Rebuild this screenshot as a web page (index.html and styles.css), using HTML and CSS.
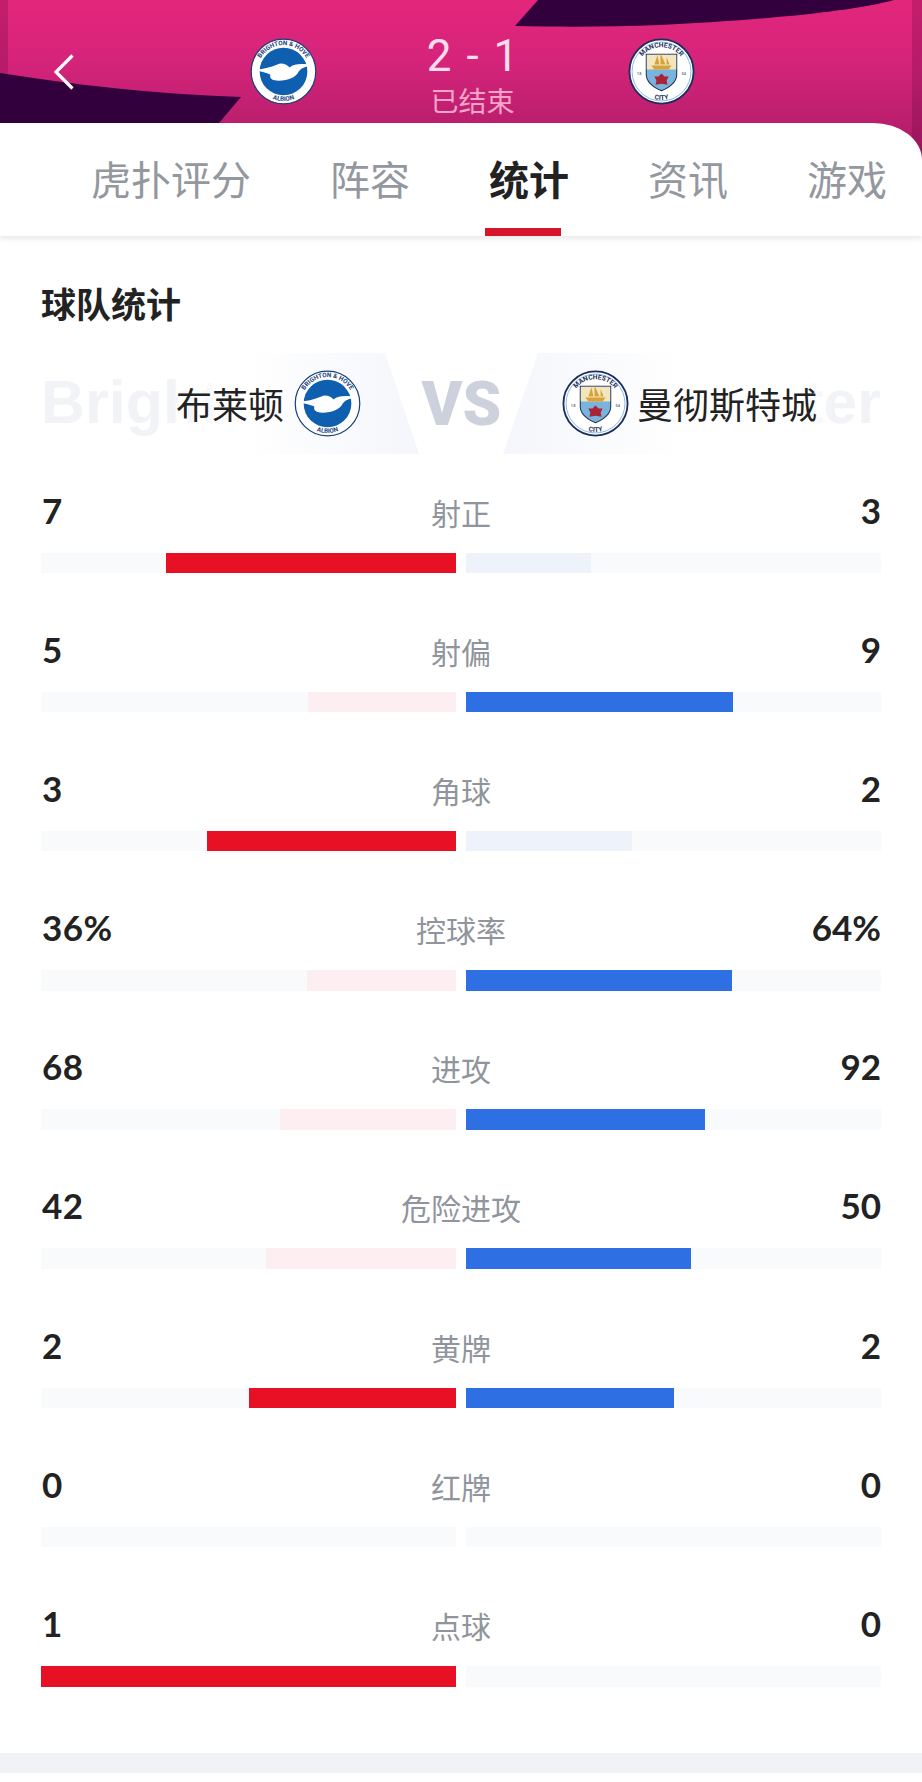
FILE: index.html
```html
<!DOCTYPE html>
<html lang="zh">
<head>
<meta charset="utf-8">
<title>球队统计</title>
<link rel="stylesheet" href="styles.css">
</head>
<body>
<header class="match">
  <svg class="shapes" viewBox="0 0 922 123" preserveAspectRatio="none" aria-hidden="true">
    <path d="M515 26L538 0H894C850 12 760 20 660 25C610 27 560 27 515 26Z" fill="#33003e"/>
    <path d="M0 73C70 84 150 94 241 97L219 123H0Z" fill="#33003e"/>
  </svg>
  <svg class="back" viewBox="0 0 20 36" aria-hidden="true"><path d="M18.500 1.500L2 18L18.500 34.500" fill="none" stroke="#fff" stroke-width="3.200"/></svg>
  <svg class="crest" viewBox="0 0 66 66">
    <circle cx="33" cy="33" r="31.800" fill="#fff" stroke="#17407c" stroke-width="1.200"/>
    <circle cx="33" cy="33" r="23.500" fill="#0f5fb0"/>
    <path id="bh-top-a" d="M7 33a26 26 0 0 1 52 0" fill="none"/>
    <path id="bh-bot-a" d="M4 33a29 29 0 0 0 58 0" fill="none"/>
    <text class="ring" font-size="6.200" fill="#17407c"><textPath href="#bh-top-a" startOffset="50%" text-anchor="middle">BRIGHTON &amp; HOVE</textPath></text>
    <text class="ring" font-size="6.200" fill="#17407c"><textPath href="#bh-bot-a" startOffset="50%" text-anchor="middle">ALBION</textPath></text>
    <path d="M3 31C12 31 20 29 27 26C31 24 36 26 39 29C44 25 52 25 62 27C54 28 50 30 48 33C45 39 38 42 28 42C22 42 19 40 20 36C16 34 9 33 3 31Z" fill="#fff"/>
  </svg>
  <div class="score">
    <div class="score-num">2 - 1</div>
    <div class="score-state">已结束</div>
  </div>
  <svg class="crest" viewBox="0 0 66 66">
    <circle cx="33" cy="33" r="31.600" fill="#fff" stroke="#1c2c5b" stroke-width="1.800"/>
    <circle cx="33" cy="33" r="29" fill="none" stroke="#6cabdd" stroke-width=".8"/>
    <path id="mc-top-a" d="M9 33a24 24 0 0 1 48 0" fill="none"/>
    <path id="mc-bot-a" d="M5 33a28 28 0 0 0 56 0" fill="none"/>
    <text class="ring" font-size="6.600" fill="#1c2c5b"><textPath href="#mc-top-a" startOffset="50%" text-anchor="middle">MANCHESTER</textPath></text>
    <text class="ring" font-size="6.600" fill="#1c2c5b"><textPath href="#mc-bot-a" startOffset="50%" text-anchor="middle">CITY</textPath></text>
    <text class="ring" x="11" y="36" font-size="4" fill="#6d7f99" text-anchor="middle">18</text>
    <text class="ring" x="55" y="36" font-size="4" fill="#6d7f99" text-anchor="middle">54</text>
    <path d="M18 16H48V36C48 44 40 49 33 52C26 49 18 44 18 36Z" fill="#7ab3dc" stroke="#1c2c5b" stroke-width="1"/>
    <path d="M18.500 16.500H47.500V31H18.500Z" fill="#f3e6bd"/>
    <path d="M23 27L26 31H40L43 27ZM26 26L29 17L31 26ZM32 26V15L37 26ZM38 26V19L41 26Z" fill="#d8a23a"/>
    <path d="M33 35L36 38L40 38L38 42L39 46L33 45L27 46L28 42L26 38L30 38Z" fill="#a92437"/>
  </svg>
</header>

<nav class="tabs">
  <span class="tab">虎扑评分</span>
  <span class="tab">阵容</span>
  <span class="tab tab-active">统计</span>
  <span class="tab">资讯</span>
  <span class="tab">游戏</span>
</nav>

<main class="panel">
  <h2 class="title">球队统计</h2>

  <section class="versus">
    <span class="ghost ghost-left">Brighton</span>
    <span class="ghost ghost-right">Manchester</span>
    <span class="wedge wedge-left"></span>
    <span class="wedge wedge-right"></span>
    <div class="team team-left">
      <span class="team-name">布莱顿</span>
      <svg class="crest" viewBox="0 0 66 66">
        <circle cx="33" cy="33" r="31.800" fill="#fff" stroke="#17407c" stroke-width="1.200"/>
        <circle cx="33" cy="33" r="23.500" fill="#0f5fb0"/>
        <path id="bh-top-b" d="M7 33a26 26 0 0 1 52 0" fill="none"/>
        <path id="bh-bot-b" d="M4 33a29 29 0 0 0 58 0" fill="none"/>
        <text class="ring" font-size="6.200" fill="#17407c"><textPath href="#bh-top-b" startOffset="50%" text-anchor="middle">BRIGHTON &amp; HOVE</textPath></text>
        <text class="ring" font-size="6.200" fill="#17407c"><textPath href="#bh-bot-b" startOffset="50%" text-anchor="middle">ALBION</textPath></text>
        <path d="M3 31C12 31 20 29 27 26C31 24 36 26 39 29C44 25 52 25 62 27C54 28 50 30 48 33C45 39 38 42 28 42C22 42 19 40 20 36C16 34 9 33 3 31Z" fill="#fff"/>
      </svg>
    </div>
    <div class="vs">VS</div>
    <div class="team team-right">
      <svg class="crest" viewBox="0 0 66 66">
        <circle cx="33" cy="33" r="31.600" fill="#fff" stroke="#1c2c5b" stroke-width="1.800"/>
        <circle cx="33" cy="33" r="29" fill="none" stroke="#6cabdd" stroke-width=".8"/>
        <path id="mc-top-b" d="M9 33a24 24 0 0 1 48 0" fill="none"/>
        <path id="mc-bot-b" d="M5 33a28 28 0 0 0 56 0" fill="none"/>
        <text class="ring" font-size="6.600" fill="#1c2c5b"><textPath href="#mc-top-b" startOffset="50%" text-anchor="middle">MANCHESTER</textPath></text>
        <text class="ring" font-size="6.600" fill="#1c2c5b"><textPath href="#mc-bot-b" startOffset="50%" text-anchor="middle">CITY</textPath></text>
        <text class="ring" x="11" y="36" font-size="4" fill="#6d7f99" text-anchor="middle">18</text>
        <text class="ring" x="55" y="36" font-size="4" fill="#6d7f99" text-anchor="middle">54</text>
        <path d="M18 16H48V36C48 44 40 49 33 52C26 49 18 44 18 36Z" fill="#7ab3dc" stroke="#1c2c5b" stroke-width="1"/>
        <path d="M18.500 16.500H47.500V31H18.500Z" fill="#f3e6bd"/>
        <path d="M23 27L26 31H40L43 27ZM26 26L29 17L31 26ZM32 26V15L37 26ZM38 26V19L41 26Z" fill="#d8a23a"/>
        <path d="M33 35L36 38L40 38L38 42L39 46L33 45L27 46L28 42L26 38L30 38Z" fill="#a92437"/>
      </svg>
      <span class="team-name">曼彻斯特城</span>
    </div>
  </section>

  <div class="stats">
    <div class="stat">
      <div class="stat-head"><span class="num">7</span><span class="label">射正</span><span class="num num-right">3</span></div>
      <div class="bars">
        <div class="track track-left"><div class="fill red" style="width:70%"></div></div>
        <div class="track"><div class="fill blue-pale" style="width:30%"></div></div>
      </div>
    </div>
    <div class="stat">
      <div class="stat-head"><span class="num">5</span><span class="label">射偏</span><span class="num num-right">9</span></div>
      <div class="bars">
        <div class="track track-left"><div class="fill red-pale" style="width:35.7%"></div></div>
        <div class="track"><div class="fill blue" style="width:64.3%"></div></div>
      </div>
    </div>
    <div class="stat">
      <div class="stat-head"><span class="num">3</span><span class="label">角球</span><span class="num num-right">2</span></div>
      <div class="bars">
        <div class="track track-left"><div class="fill red" style="width:60%"></div></div>
        <div class="track"><div class="fill blue-pale" style="width:40%"></div></div>
      </div>
    </div>
    <div class="stat">
      <div class="stat-head"><span class="num">36%</span><span class="label">控球率</span><span class="num num-right">64%</span></div>
      <div class="bars">
        <div class="track track-left"><div class="fill red-pale" style="width:36%"></div></div>
        <div class="track"><div class="fill blue" style="width:64%"></div></div>
      </div>
    </div>
    <div class="stat">
      <div class="stat-head"><span class="num">68</span><span class="label">进攻</span><span class="num num-right">92</span></div>
      <div class="bars">
        <div class="track track-left"><div class="fill red-pale" style="width:42.5%"></div></div>
        <div class="track"><div class="fill blue" style="width:57.5%"></div></div>
      </div>
    </div>
    <div class="stat">
      <div class="stat-head"><span class="num">42</span><span class="label">危险进攻</span><span class="num num-right">50</span></div>
      <div class="bars">
        <div class="track track-left"><div class="fill red-pale" style="width:45.7%"></div></div>
        <div class="track"><div class="fill blue" style="width:54.3%"></div></div>
      </div>
    </div>
    <div class="stat">
      <div class="stat-head"><span class="num">2</span><span class="label">黄牌</span><span class="num num-right">2</span></div>
      <div class="bars">
        <div class="track track-left"><div class="fill red" style="width:50%"></div></div>
        <div class="track"><div class="fill blue" style="width:50%"></div></div>
      </div>
    </div>
    <div class="stat">
      <div class="stat-head"><span class="num">0</span><span class="label">红牌</span><span class="num num-right">0</span></div>
      <div class="bars">
        <div class="track track-left"></div>
        <div class="track"></div>
      </div>
    </div>
    <div class="stat">
      <div class="stat-head"><span class="num">1</span><span class="label">点球</span><span class="num num-right">0</span></div>
      <div class="bars">
        <div class="track track-left"><div class="fill red" style="width:100%"></div></div>
        <div class="track"></div>
      </div>
    </div>
  </div>
</main>

<div class="foot-band"></div>
</body>
</html>
```
FILE: styles.css
```css
* { box-sizing: border-box; }
html, body { margin: 0; padding: 0; }
body {
  width: 922px;
  height: 1782px;
  overflow: hidden;
  background: #fff;
  font-family: Lato, "Noto Sans CJK SC", sans-serif;
  color: #222;
}
.ring { font-family: Roboto, sans-serif; font-weight: 700; }
.crest { display: block; width: 67px; height: 67px; flex: none; }

/* header */
.match {
  position: relative;
  height: 162px;
  margin-bottom: -39px;
  padding-top: 38px;
  display: grid;
  grid-template-columns: 250px 67px 311px 67px;
  align-items: start;
  background:
    linear-gradient(to right, rgba(80, 0, 50, .22) 0 8px, transparent 8px 912px, rgba(80, 0, 50, .22) 912px),
    linear-gradient(180deg, #e3267c 0%, #d4247a 40%, #bd1f6e 72%, #a81c68 100%);
}
.shapes { position: absolute; left: 0; top: 0; width: 922px; height: 123px; }
.back { position: relative; width: 20px; height: 36px; margin: 16px 0 0 54px; }
.match .crest { position: relative; }
.score { position: relative; text-align: center; }
.score-num {
  font-family: Roboto, sans-serif;
  font-size: 44px;
  line-height: 32px;
  margin-top: 2px;
  color: #fbdcec;
  word-spacing: 4px;
}
.score-state {
  margin-top: 15px;
  font-size: 28px;
  line-height: 28px;
  color: #f7a3cb;
}

/* tabs */
.tabs {
  position: relative;
  height: 113px;
  padding: 31px 0 0 91px;
  display: flex;
  gap: 79px;
  background: #fff;
  border-top-right-radius: 49px 37px;
  box-shadow: 0 3px 5px rgba(40, 45, 60, .1);
}
.tab {
  position: relative;
  height: 52px;
  font-size: 40px;
  line-height: 52px;
  color: #93979e;
  white-space: nowrap;
}
.tab-active { color: #222; font-weight: 700; }
.tab-active::after {
  content: "";
  position: absolute;
  left: -4px;
  top: 74px;
  width: 76px;
  height: 8px;
  background: #d5152a;
}

/* panel */
.panel { padding: 0 41px; }
.title {
  margin: 47px 0 0;
  font-size: 35px;
  line-height: 42px;
  font-weight: 700;
  color: #222;
}
.versus {
  position: relative;
  height: 101px;
  margin-top: 28px;
  display: grid;
  grid-template-columns: 320px 201px 1fr;
  align-items: center;
}
.ghost {
  position: absolute;
  top: 14px;
  font-family: "Liberation Sans Narrow", "Liberation Sans", sans-serif;
  font-weight: 700;
  font-size: 61px;
  line-height: 70px;
  color: #f2f3f7;
  white-space: nowrap;
}
.ghost-left { left: 0; }
.ghost-right { right: 0; }
.wedge { position: absolute; top: 0; height: 101px; }
.wedge-left {
  left: 130px;
  width: 248px;
  background: linear-gradient(to right, rgba(255,255,255,0) 0, #fff 30%, #f4f6fb 100%);
  clip-path: polygon(0 0, 214px 0, 100% 100%, 0 100%);
}
.wedge-right {
  left: 462px;
  width: 330px;
  background: linear-gradient(to right, #f4f6fb 0, #fff 55%, #fff 90%, rgba(255,255,255,0) 100%);
  clip-path: polygon(35px 0, 100% 0, 100% 100%, 0 100%);
}
.team {
  position: relative;
  display: flex;
  align-items: center;
  gap: 10px;
}
.team-left { justify-content: flex-end; }
.team-right { gap: 8px; }
.team-name {
  padding-top: 2px;
  font-size: 36px;
  line-height: 48px;
  color: #222;
  white-space: nowrap;
}
.vs {
  position: relative;
  text-align: center;
  font-family: Roboto, sans-serif;
  font-weight: 900;
  font-size: 62px;
  line-height: 60px;
  color: #cdd1dc;
}

/* stats */
.stats {
  margin-top: 35.500px;
  display: flex;
  flex-direction: column;
  gap: 55.700px;
}
.stat-head {
  height: 38px;
  display: grid;
  grid-template-columns: 1fr auto 1fr;
  align-items: center;
}
.num {
  padding-left: 1px;
  font-size: 35px;
  line-height: 40px;
  font-weight: 700;
  letter-spacing: .5px;
  color: #222;
}
.num-right { text-align: right; padding-left: 0; letter-spacing: 0; }
.label {
  position: relative;
  top: 3px;
  font-size: 30px;
  line-height: 40px;
  color: #90959d;
}
.bars {
  margin-top: 25px;
  display: grid;
  grid-template-columns: 415px 415px;
  gap: 10px;
}
.track {
  height: 20.500px;
  display: flex;
  background: #f9fafc;
}
.track-left { justify-content: flex-end; }
.fill { height: 100%; }
.red { background: #e81024; }
.red-pale { background: #fdeff1; }
.blue { background: #2f6fe4; }
.blue-pale { background: #edf2fb; }

.foot-band {
  height: 20px;
  margin-top: 66.500px;
  background: #f1f2f6;
}
```
